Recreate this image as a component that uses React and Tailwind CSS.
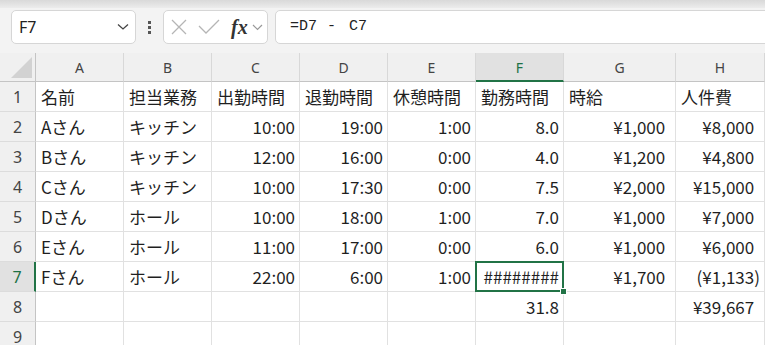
import React from "react";

const cols = ["A", "B", "C", "D", "E", "F", "G", "H"];

const rows = [
  ["名前", "担当業務", "出勤時間", "退勤時間", "休憩時間", "勤務時間", "時給", "人件費"],
  ["Aさん", "キッチン", "10:00", "19:00", "1:00", "8.0", "¥1,000", "¥8,000"],
  ["Bさん", "キッチン", "12:00", "16:00", "0:00", "4.0", "¥1,200", "¥4,800"],
  ["Cさん", "キッチン", "10:00", "17:30", "0:00", "7.5", "¥2,000", "¥15,000"],
  ["Dさん", "ホール", "10:00", "18:00", "1:00", "7.0", "¥1,000", "¥7,000"],
  ["Eさん", "ホール", "11:00", "17:00", "0:00", "6.0", "¥1,000", "¥6,000"],
  ["Fさん", "ホール", "22:00", "6:00", "1:00", "########", "¥1,700", "(¥1,133)"],
  ["", "", "", "", "", "31.8", "", "¥39,667"],
  ["", "", "", "", "", "", "", ""],
];

function Cell({ value, row, col }) {
  const right = row > 0 && col >= 2;
  const selected = row === 6 && col === 5;
  const money = value.startsWith("¥");
  return (
    <div
      className={`relative h-[30px] border-r border-b border-[#e1e1e1] flex items-center px-[4px] text-[17px] leading-none text-[#1f1f1f] whitespace-nowrap ${
        right ? "justify-end" : "justify-start pl-[5px]"
      } ${selected ? "z-10" : ""}`}
    >
      <span>
        {value}
        {money && <span className="invisible">)</span>}
      </span>
      {selected && (
        <>
          <div className="absolute -left-px -top-px -right-px -bottom-px border-2 border-[#217346]" />
          <div className="absolute -right-[4px] -bottom-[4px] w-[7px] h-[7px] bg-[#217346] border border-white" />
        </>
      )}
    </div>
  );
}

export default function App() {
  return (
    <div className="w-[765px] h-[345px] overflow-hidden bg-white font-['Noto_Sans_CJK_JP',sans-serif]">
      {/* Toolbar */}
      <div className="bg-[#f3f3f3]">
        <div className="h-[8px] bg-gradient-to-b from-[#d9d9d9] to-[#ececec]" />
        <div className="flex items-center h-[45px] pt-[2px] pb-[9px]">
          <div className="ml-[11px] w-[125px] h-[34px] bg-white border border-[#d6d6d6] rounded-[5px] flex items-center pl-[7px] pr-[6px]">
            <span className="text-[16px] text-[#222] font-['Noto_Sans',sans-serif]">F7</span>
            <svg className="ml-auto" width="12" height="8" viewBox="0 0 12 8" fill="none">
              <path d="M1 1.5 L6 6 L11 1.5" stroke="#444" strokeWidth="1.3" />
            </svg>
          </div>
          <div className="w-[27px] flex flex-col items-center gap-[2px]">
            <div className="w-[3px] h-[3px] bg-[#555]" />
            <div className="w-[3px] h-[3px] bg-[#555]" />
            <div className="w-[3px] h-[3px] bg-[#555]" />
          </div>
          <div className="w-[105px] h-[34px] bg-white border border-[#d6d6d6] rounded-[5px] flex items-center pl-[7px]">
            <svg width="16" height="16" viewBox="0 0 16 16" fill="none">
              <path d="M1 1 L15 15 M15 1 L1 15" stroke="#b5b5b5" strokeWidth="1.3" />
            </svg>
            <svg className="ml-[11px]" width="22" height="16" viewBox="0 0 22 16" fill="none">
              <path d="M1 7 L8 14 L21 1" stroke="#b5b5b5" strokeWidth="1.3" />
            </svg>
            <span className="ml-[11px] text-[20px] leading-none italic font-bold text-[#333] font-['Liberation_Serif',serif]">
              fx
            </span>
            <svg className="ml-[4px]" width="11" height="7" viewBox="0 0 11 7" fill="none">
              <path d="M1 1 L5.5 5.5 L10 1" stroke="#999" strokeWidth="1.2" />
            </svg>
          </div>
          <div className="ml-[7px] flex-1 -mr-[10px] h-[34px] bg-white border border-[#d6d6d6] rounded-[5px] flex items-center pl-[14px] text-[15px] text-[#222] font-['Liberation_Mono',monospace]">
            <span>=D7</span>
            <span className="ml-[10px]">-</span>
            <span className="ml-[13px]">C7</span>
          </div>
        </div>
      </div>

      {/* Sheet */}
      <div className="grid grid-cols-[36px_88px_88px_88px_88px_88px_88px_112px_1fr]">
        <div className="h-[29px] bg-[#f0f0f0] border-r border-b border-[#c4c4c4] relative">
          <svg className="absolute right-[3px] bottom-[3px]" width="21" height="21" viewBox="0 0 21 21">
            <path d="M21 0 L21 21 L0 21 Z" fill="#d2d2d2" />
          </svg>
        </div>
        {cols.map((c) => (
          <div
            key={c}
            className={`h-[29px] flex justify-center pt-[4px] text-[14px] font-['Noto_Sans',sans-serif] border-r border-[#d8d8d8] ${
              c === "F"
                ? "bg-[#e1e1e1] text-[#1e7145] border-b-2 border-b-[#217346]"
                : "bg-[#f0f0f0] text-[#444] border-b border-b-[#c4c4c4]"
            }`}
          >
            {c}
          </div>
        ))}

        {rows.map((r, i) => (
          <React.Fragment key={i}>
            <div
              className={`h-[30px] flex items-center justify-center text-[16px] font-['Noto_Sans',sans-serif] border-b border-[#dcdcdc] ${
                i === 6
                  ? "bg-[#e1e1e1] text-[#1e7145] border-r-2 border-r-[#217346]"
                  : "bg-[#f0f0f0] text-[#444] border-r border-r-[#c4c4c4]"
              }`}
            >
              {i + 1}
            </div>
            {r.map((v, j) => (
              <Cell key={j} value={v} row={i} col={j} />
            ))}
          </React.Fragment>
        ))}
      </div>
    </div>
  );
}
